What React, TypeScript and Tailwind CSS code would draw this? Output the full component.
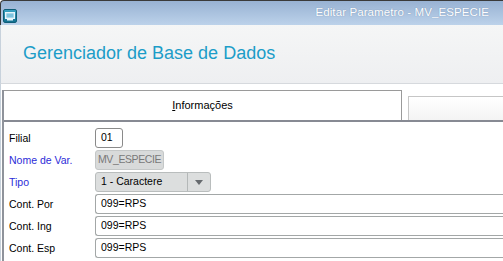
import React from "react";

const Row = ({ label, blue, children }: { label: string; blue?: boolean; children: React.ReactNode }) => (
  <div className="flex items-center h-[20px] mb-[2px]">
    <div className={`w-[91px] pl-[5px] text-[10.5px] leading-none ${blue ? "text-[#2c2cd8]" : "text-black"}`}>{label}</div>
    {children}
  </div>
);

export default function App() {
  return (
    <div
      className="w-[503px] h-[261px] overflow-hidden bg-white flex flex-col"
      style={{ fontFamily: '"Liberation Sans", Arial, sans-serif' }}
    >
      {/* Title bar */}
      <div className="h-[25px] shrink-0 border-t border-l border-[#3a3a3a] rounded-tl-[4px] bg-gradient-to-b from-[#98b2d3] to-[#bcd2ea] flex items-start relative">
        <div className="mt-[8px] ml-[2px] w-[14px] h-[14px] rounded-[2px] bg-gradient-to-b from-[#3aa3c4] to-[#12708f] border border-[#0f5e78] flex items-center justify-center">
          <svg width="10" height="9" viewBox="0 0 10 9">
            <rect x="0.5" y="0.5" width="9" height="6" fill="#cfe9f4" stroke="#e8f6fb" strokeWidth="1" />
            <rect x="1.5" y="1.5" width="7" height="4" fill="#7cc3de" />
            <rect x="2" y="7" width="6" height="1.5" fill="#e8f6fb" />
          </svg>
        </div>
        <div className="ml-auto mr-[14px] mt-[6px] text-[11.5px] text-white leading-none tracking-[0.1px]" style={{ textShadow: "0 0 1px rgba(80,110,150,0.7)" }}>
          Editar Parametro - MV_ESPECIE
        </div>
      </div>

      {/* Header */}
      <div className="h-[59px] shrink-0 border-l border-[#c8d2dc] border-b border-b-[#d6d9dd] bg-gradient-to-b from-[#f5f6f6] to-[#eeeff1] flex items-center">
        <div className="ml-[22px] mt-[-2px] text-[18px] text-[#1c9dc8] leading-none">Gerenciador de Base de Dados</div>
      </div>

      {/* Body */}
      <div className="flex-1 border-l border-[#c8d2dc] flex flex-col pt-[6px]">
        <div className="ml-[1px] border-l-[2px] border-[#8f939b] flex-1 flex flex-col">
          {/* Tabs */}
          <div className="flex items-end h-[30px] shrink-0">
            <div className="w-[398px] h-[30px] border-t-[1px] border-r-[1px] border-[#9a9a9a] bg-white flex items-center justify-center text-[11px] text-black">
              <span>
                <span className="underline">I</span>nformações
              </span>
            </div>
            <div className="ml-[6px] flex-1 h-[24px] border-t border-l border-[#c6c6c6] bg-gradient-to-b from-white to-[#f4f4f4]" />
          </div>
          <div className="h-[2px] bg-[#878a93] shrink-0" />

          {/* Form */}
          <div className="pt-[6px] flex flex-col">
            <Row label="Filial">
              <div className="w-[28px] h-[20px] border border-[#8a8a8a] rounded-[3px] bg-white text-[10.5px] flex items-center pl-[5px]">01</div>
            </Row>
            <Row label="Nome de Var." blue>
              <div className="w-[69px] h-[20px] border border-[#c4c7c7] rounded-[3px] bg-[#d8dada] text-[10.5px] tracking-[-0.4px] text-[#787878] flex items-center pl-[2px] overflow-hidden whitespace-nowrap">MV_ESPECIE</div>
            </Row>
            <Row label="Tipo" blue>
              <div className="w-[116px] h-[20px] border border-[#b9bdbd] rounded-[3px] bg-[#dcdede] text-[10.5px] flex items-center">
                <div className="flex-1 pl-[5px]">1 - Caractere</div>
                <div className="w-[23px] h-full border-l border-[#b4b8b8] flex items-center justify-center">
                  <svg width="8" height="5" viewBox="0 0 8 5">
                    <path d="M0 0 L8 0 L4 5 Z" fill="#666a6e" />
                  </svg>
                </div>
              </div>
            </Row>
            <Row label="Cont. Por">
              <div className="flex-1 h-[20px] border border-r-0 border-[#a3a7a7] rounded-l-[3px] bg-white text-[10.5px] flex items-center pl-[5px]">099=RPS</div>
            </Row>
            <Row label="Cont. Ing">
              <div className="flex-1 h-[20px] border border-r-0 border-[#a3a7a7] rounded-l-[3px] bg-white text-[10.5px] flex items-center pl-[5px]">099=RPS</div>
            </Row>
            <Row label="Cont. Esp">
              <div className="flex-1 h-[20px] border border-r-0 border-[#a3a7a7] rounded-l-[3px] bg-white text-[10.5px] flex items-center pl-[5px]">099=RPS</div>
            </Row>
          </div>
        </div>
      </div>
    </div>
  );
}
